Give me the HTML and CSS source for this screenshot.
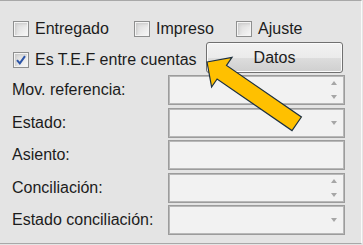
FILE: index.html
```html
<!DOCTYPE html>
<html lang="es">
<head>
    <meta charset="UTF-8">
    <title>Movimiento</title>
    <link rel="stylesheet" href="styles.css">
</head>
<body>
    <div class="panel">
        <div class="checks">
            <label class="check"><span class="box"></span>Entregado</label>
            <label class="check"><span class="box"></span>Impreso</label>
            <label class="check"><span class="box"></span>Ajuste</label>
        </div>

        <div class="tef-row">
            <label class="check">
                <span class="box">
                    <svg class="tick" width="10" height="10" viewBox="0 0 10 10"><path d="M1 5.2 L3.8 8.4 L9 1.2" fill="none" stroke="#2c55a8" stroke-width="2"/></svg>
                </span>Es T.E.F entre cuentas
            </label>
            <button class="btn" type="button">Datos</button>
        </div>

        <div class="fields">
            <div class="field-row">
                <span class="field-label">Mov. referencia:</span>
                <div class="field"><span class="spin"><i class="up"></i><i class="down"></i></span></div>
            </div>
            <div class="field-row">
                <span class="field-label">Estado:</span>
                <div class="field"><span class="drop"><i class="down"></i></span></div>
            </div>
            <div class="field-row">
                <span class="field-label">Asiento:</span>
                <div class="field"></div>
            </div>
            <div class="field-row">
                <span class="field-label">Conciliación:</span>
                <div class="field"><span class="spin"><i class="up"></i><i class="down"></i></span></div>
            </div>
            <div class="field-row">
                <span class="field-label">Estado conciliación:</span>
                <div class="field"><span class="drop"><i class="down"></i></span></div>
            </div>
        </div>

        <!-- callout arrow pointing at the checkbox -->
        <svg class="arrow" width="363" height="245" viewBox="0 0 363 245">
            <polygon points="207,62 232,57.4 226.5,65.4 301.4,117 292,130.6 217.1,79 211.6,87" fill="#ffc000" stroke="#1d3040" stroke-width="1.2" stroke-linejoin="miter"/>
        </svg>
    </div>
</body>
</html>
```

FILE: styles.css
```css
body {
    margin: 0;
    font-family: "Liberation Sans", Arial, sans-serif;
    font-size: 16px;
    color: #1c1c1c;
    background: #e4e4e4;
}

.panel {
    position: relative;
    width: 361px;
    height: 242px;
    background: #e4e4e4;
    border-top: 1px solid #a8a8a8;
    border-right: 1px solid #fafafa;
    border-bottom: 1px solid #a8a8a8;
    box-shadow: 0 1px 0 #fafafa;
}

.checks {
    display: grid;
    grid-template-columns: 121px 102px auto;
    padding-left: 13px;
    margin-top: 19px;
    height: 17px;
}

.check {
    display: flex;
    align-items: center;
    gap: 6px;
    white-space: nowrap;
}

.box {
    box-sizing: border-box;
    width: 16px;
    height: 16px;
    border: 1px solid #8e8f8f;
    padding: 1px;
    background: #f4f4f4;
    display: flex;
    align-items: center;
    justify-content: center;
    flex: none;
    background-clip: padding-box;
    box-shadow: inset 0 0 0 1px #f4f4f4, inset 2px 2px 3px #c9c9c9;
    background-image: linear-gradient(135deg, #d6d6d6, #f8f8f8);
}

.tick {
    display: block;
}

.tef-row {
    display: flex;
    align-items: flex-end;
    padding-left: 13px;
    margin-top: 5px;
    height: 31px;
}

.tef-row .check {
    margin-bottom: 4px;
}

.btn {
    margin-left: auto;
    margin-right: 18px;
    width: 137px;
    height: 31px;
    font-family: inherit;
    font-size: 16px;
    color: #1c1c1c;
    border: 1px solid #707070;
    border-radius: 3px;
    background: linear-gradient(#f2f2f2 0%, #ebebeb 50%, #dddddd 51%, #cfcfcf 100%);
    box-shadow: inset 0 0 0 1px #fbfbfb;
    padding: 0;
}

.fields {
    display: flex;
    flex-direction: column;
    gap: 2.5px;
    margin-top: 2px;
    padding-left: 12px;
}

.field-row {
    display: flex;
    align-items: center;
    height: 30px;
}

.field-label {
    width: 156px;
    white-space: nowrap;
}

.field {
    box-sizing: border-box;
    position: relative;
    width: 177px;
    height: 30px;
    border: 1px solid #9c9c9c;
    background: #f2f2f2;
    box-shadow: inset 0 0 0 1px #b8b8b8;
}

.spin, .drop {
    position: absolute;
    right: 7px;
    top: 0;
    bottom: 0;
    width: 7px;
    display: flex;
    flex-direction: column;
    justify-content: center;
    align-items: center;
}

.spin {
    gap: 10px;
}

.up, .down {
    display: block;
    width: 0;
    height: 0;
    border-left: 3.5px solid transparent;
    border-right: 3.5px solid transparent;
}

.up {
    border-bottom: 4px solid #a6a6a6;
}

.down {
    border-top: 4px solid #a6a6a6;
}

.arrow {
    position: absolute;
    left: 0;
    top: -1px;
    pointer-events: none;
}
```
